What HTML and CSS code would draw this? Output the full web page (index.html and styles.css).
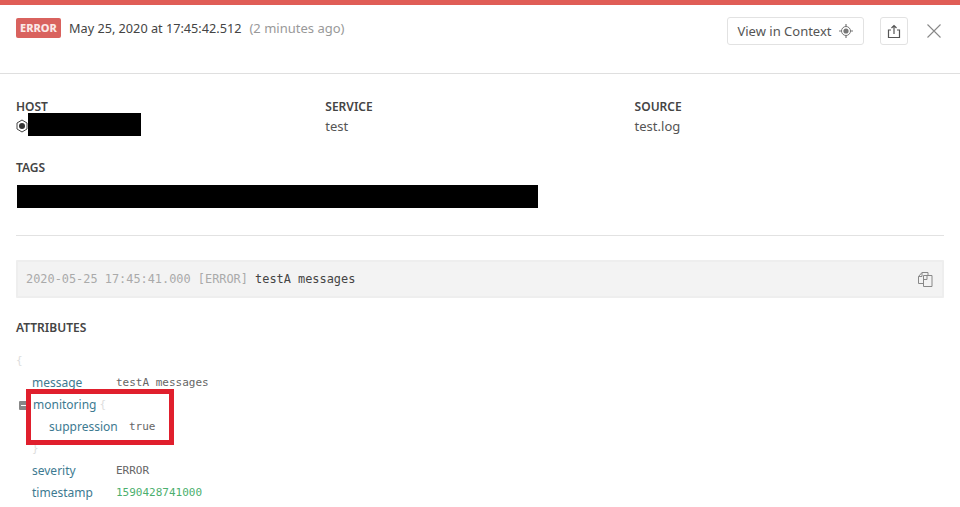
FILE: index.html
```html
<!DOCTYPE html>
<html lang="en">
<head>
<meta charset="utf-8">
<title>Log detail</title>
<link rel="stylesheet" href="styles.css">
</head>
<body>
<div class="topbar"></div>
<header class="header">
  <div class="when">
    <span class="badge">ERROR</span>
    <span class="date">May 25, 2020 at 17:45:42.512</span>
    <span class="ago">(2 minutes ago)</span>
  </div>
  <div class="actions">
    <button class="btn context">View in Context
      <svg width="16" height="16" viewBox="0 0 16 16" class="target"><circle cx="8" cy="8" r="4.5" fill="none" stroke="#777" stroke-width="1"/><circle cx="8" cy="8" r="2.6" fill="#777"/><path d="M8 1v3M8 12v3M1 8h3M12 8h3" stroke="#777" stroke-width="1.2"/></svg>
    </button>
    <button class="btn share">
      <svg width="14" height="15" viewBox="0 0 14 15"><path d="M4 6H1.5v7.5h11V6H10" fill="none" stroke="#555" stroke-width="1.2"/><path d="M7 10V1.5M4.5 4L7 1.5 9.5 4" fill="none" stroke="#555" stroke-width="1.2"/></svg>
    </button>
    <svg class="close" width="14" height="14" viewBox="0 0 14 14"><path d="M0.5 0.5l13 13M13.5 0.5l-13 13" stroke="#888" stroke-width="1.1"/></svg>
  </div>
</header>
<main class="main">
  <section class="meta">
    <div class="col">
      <h3 class="label">HOST</h3>
      <div class="value host">
        <svg width="12" height="14" viewBox="0 0 12 14"><path d="M6 1l5 3v6l-5 3-5-3V4z" fill="#fff" stroke="#444"/><circle cx="6" cy="7" r="3" fill="#333"/></svg>
        <span class="redact host-redact"></span>
      </div>
    </div>
    <div class="col">
      <h3 class="label">SERVICE</h3>
      <div class="value">test</div>
    </div>
    <div class="col">
      <h3 class="label">SOURCE</h3>
      <div class="value">test.log</div>
    </div>
  </section>
  <section class="tags">
    <h3 class="label">TAGS</h3>
    <div class="redact tags-redact"></div>
  </section>
  <hr class="rule">
  <div class="logline">
    <code class="line"><span class="muted">2020-05-25 17:45:41.000 [ERROR]</span> testA messages</code>
    <svg width="15" height="15" viewBox="0 0 15 15"><path d="M5.5 11.5H.5V4.5L4 .5h6v3" fill="none" stroke="#888"/><path d="M4 .5v4H.5" fill="none" stroke="#888"/><path d="M5.5 3.5h8.5v11H5.5z" fill="#f3f3f3" stroke="#888"/><path d="M9 3.5v4H5.5" fill="none" stroke="#888"/></svg>
  </div>
  <h3 class="label attrs">ATTRIBUTES</h3>
  <div class="json">
    <div class="row brace">{</div>
    <div class="row"><span class="key k1">message</span><span class="val">testA messages</span></div>
    <div class="row nested">
      <span class="toggle"></span><span class="key">monitoring</span><span class="brace inline">{</span>
    </div>
    <div class="row"><span class="key k2">suppression</span><span class="val">true</span></div>
    <div class="row brace inner">}</div>
    <div class="row"><span class="key k1">severity</span><span class="val">ERROR</span></div>
    <div class="row"><span class="key k1">timestamp</span><span class="val num">1590428741000</span></div>
    <div class="highlight"></div>
  </div>
</main>
</body>
</html>
```
FILE: styles.css
```css
* { box-sizing: border-box; }
html, body { margin: 0; padding: 0; }
body {
  width: 960px;
  height: 507px;
  overflow: hidden;
  background: #fff;
  font-family: "Noto Sans", "Open Sans", sans-serif;
  font-size: 13px;
  color: #4a4a4a;
}
.topbar { height: 5px; background: #e05d56; }
.header {
  height: 69px;
  border-bottom: 1px solid #dfdfdf;
  padding: 12px 16px 0;
  display: flex;
  justify-content: space-between;
  align-items: flex-start;
}
.when { display: flex; align-items: center; height: 20px; margin-top: 1px; }
.badge {
  background: #d9625e;
  color: #fbe9e7;
  font-size: 11px;
  font-weight: 800;
  border-radius: 2px;
  width: 45px;
  height: 20px;
  line-height: 20px;
  text-align: center;
  margin-right: 8px;
}
.date { color: #444; font-size: 12.7px; margin-top: -1px; }
.ago { color: #999; margin-left: 8px; font-size: 13px; margin-top: -1px; }
.actions { display: flex; align-items: center; }
.btn {
  height: 28px;
  background: #fff;
  border: 1px solid #e2e2e2;
  border-radius: 3px;
  font: inherit;
  font-size: 13px;
  color: #555;
  display: flex;
  align-items: center;
  justify-content: center;
  padding: 0;
}
.context { width: 137px; gap: 6px; }
.share { width: 28px; margin-left: 16px; }
.close { margin-left: 19px; margin-right: 3px; }
.main { padding: 0 16px; }
.meta { display: flex; padding-top: 25px; }
.col { width: 309.3px; }
.label { margin: 0; font-size: 12px; font-weight: 600; line-height: 16px; color: #444; }
.value { font-size: 13px; line-height: 22px; color: #555; }
.host { display: flex; align-items: center; height: 22px; }
.redact { background: #000; display: block; }
.host-redact { width: 113px; height: 23px; align-self: flex-start; margin-top: -2px; }
.tags { padding-top: 23px; }
.tags-redact { width: 521px; height: 23px; margin: 9px 0 0 1px; }
.rule { border: 0; border-top: 1px solid #e2e2e2; margin: 27px 0 0; }
.logline {
  margin-top: 24px;
  height: 38px;
  background: #f3f3f3;
  border: 2px solid #eeeeee;
  border-radius: 1px;
  padding: 0 9px 0 8px;
  display: flex;
  align-items: center;
  justify-content: space-between;
}
.line { font-family: "DejaVu Sans Mono", monospace; font-size: 11.9px; color: #444; }
.muted { color: #aaa; }
.attrs { margin-top: 22px; }
.json { position: relative; margin-top: 14px; font-size: 12px; }
.row { height: 22px; line-height: 22px; display: flex; align-items: center; }
.brace { color: #ddd; font-family: "DejaVu Sans Mono", monospace; font-size: 11px; }
.inner { padding-left: 16px; }
.inline { margin-left: 3px; }
.key { color: #3d7a91; }
.k1 { width: 84px; margin-left: 16px; }
.k2 { width: 80px; margin-left: 33px; }
.val { font-family: "DejaVu Sans Mono", monospace; font-size: 11px; color: #666; }
.num { color: #4caf6e; }
.nested { padding-left: 3px; }
.toggle {
  width: 9px;
  height: 9px;
  background: #888;
  border-radius: 1px;
  margin-right: 5px;
  position: relative;
}
.toggle::after {
  content: "";
  position: absolute;
  left: 2px;
  right: 2px;
  top: 4px;
  height: 1px;
  background: #fff;
}
.highlight {
  position: absolute;
  left: 10px;
  top: 39px;
  width: 148px;
  height: 56px;
  border: 5px solid #e01f2d;
}
```
